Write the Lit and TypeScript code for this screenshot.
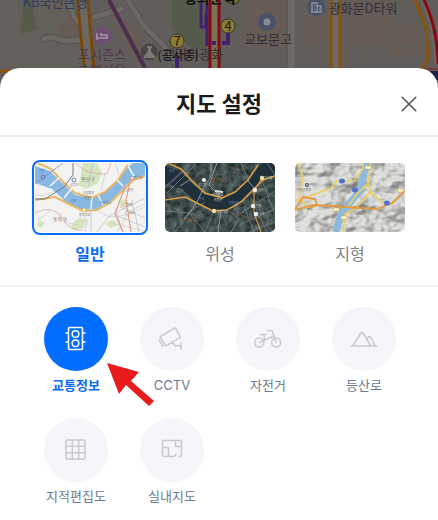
import { LitElement, html, css, svg, nothing } from "lit";
import { customElement, state } from "lit/decorators.js";

const backdrop = svg`
  <rect width="438" height="100" fill="#615d5a" />
  <path d="M0 0H70L84 72H0Z" fill="#63605c" />
  <path d="M24 0h8l4 30-16 4z M172 0h35v50l-17-2-18-20z" fill="#545b4b" />
  <path d="M50 0h16v10H50z M58 20l16-4 4 20-18 4z M112 28l20-8 14 24-12 12z M243 0h44v48h-44z M306 14h22v32h-22z M348 0h44v46h-44z M396 24h26v22h-26z M392 48h30v8h-30z" fill="#675c55" />
  <g fill="none" stroke-linecap="round">
    <path d="M44 39q8-3 14 0t22 1M68 0q4 18 16 28M94 17l28-8M128 0l16 26 22 22 12 20" stroke="#57534f" stroke-width="7" />
    <path d="M44 39q8-3 14 0t22 1M68 0q4 18 16 28M94 17l28-8M128 0l16 26 22 22 12 20" stroke="#6b6864" stroke-width="5" />
  </g>
  <path d="M291 0V68M336 0V70" stroke="#6b6a68" stroke-width="7" />
  <path d="M287 0V66" stroke="#55534f" />
  <path d="M83 0l7 70" stroke="#6b6864" stroke-width="10" />
  <path d="M78 0q1 25 7 70M88 0q2 28 6 70" fill="none" stroke="#7a4707" stroke-width="3" />
  <path d="M109 0l36 68" stroke="#4d2c4c" stroke-width="4" />
  <path d="M331 0V70M340 0V70" stroke="#8a5308" stroke-width="3" />
  <path d="M415 0l11 27 2 32-5 9" fill="none" stroke="#8a5308" stroke-width="3" />
  <path d="M423 0q13 26 14 64" fill="none" stroke="#6b6864" stroke-width="5" />
  <path d="M424 0q13 26 14 64" fill="none" stroke="#850a12" stroke-width="3" />
  <path d="M210 0h10v72h-10z" fill="#7b7058" />
  <path d="M201 3v24h5V14M207 5v41" fill="none" stroke="#42206f" stroke-width="3" />
  <path d="M222 43h6V33M212 43h4M177 57v11" fill="none" stroke="#42206f" stroke-width="4" />
  <path d="M210 0V70M219 0V70" stroke="#850a12" stroke-width="3" />
  <path d="M0 71h20" stroke="#8a5308" stroke-width="3" />
  <path d="M20 69H438" stroke="#74393c" stroke-width="2" />
  <path d="M428 71h10v9h-10z" fill="#1f2143" />
  <circle cx="102" cy="36" r="9" fill="#6d4f72" />
  <path d="M97 33v7M97 38h10v-3h-6v-2" fill="none" stroke="#a797a9" stroke-width="1.5" />
  <circle cx="149" cy="52" r="8.5" fill="#474542" />
  <path d="M147 46h5v2h-1v3l4 5v2h-11v-2l4-5v-3h-1z" fill="#7b7874" />
  <circle cx="267" cy="22" r="9" fill="#4a5068" />
  <circle cx="267" cy="22" r="3.5" fill="#888b96" />
  <circle cx="316" cy="7" r="9" fill="#4a5068" />
  <path d="M312 12V3h5v9M317 6h4v6M311 12h11M314 6h1M314 9h1M319 9h1" fill="none" stroke="#8f929c" stroke-width="1.4" />
  <circle cx="233" cy="-3" r="7" fill="#81742f" stroke="#24231f" />
  <circle cx="177" cy="41" r="7" fill="#8b7d32" stroke="#383527" />
  <circle cx="228" cy="26" r="7" fill="#8b7d32" stroke="#383527" />
  <g class="map-text" text-anchor="middle">
    <text x="177" y="46" fill="#171610">7</text>
    <text x="228" y="31" fill="#171610">4</text>
    <text x="55" y="7" fill="#293d5c">KB국민은행</text>
    <text x="102" y="59" fill="#503653">포시즌스</text>
    <text x="102" y="75" fill="#503653">호텔서울</text>
    <text x="193" y="59" fill="#33312f">갤러리광화</text>
    <text x="178" y="60" class="small" fill="#151412">(공사중)</text>
    <text x="210" y="3" class="strong" fill="#0e0e0e">광화문역</text>
    <text x="268" y="44" fill="#2c303c">교보문고</text>
    <text x="363" y="13" fill="#2c303c">광화문D타워</text>
  </g>`;

const river =
  "M0 3L15 8 27 20 40 32 57 35 70 29 83 17 93 4 98 0H110V12L100 15 90 23 77 37 62 46 47 47 30 38 17 26 0 20Z";
const northBank = "M3 0L16 6 27 18 40 30 57 35 70 29 83 17 93 2";
const southBank = "M0 37L20 34 36 42 48 48 62 47 76 39 90 25 98 17 110 13";

const normalMap = svg`
  <rect width="110" height="69" fill="#f3f3f1" />
  <path d="M48 0h14l5 10-4 10-12 6-8-4 3-10z M36 62l8-7 10 2-6 8-10 2z M96 0h14v5l-8 3z M4 57l6 3-4 5-4-2z M70 60l9-3 4 5-8 3z M84 38l8-2 2 6-8 3z" fill="#d4e5c0" />
  <path d="M0 32q12 3 24-8M16 46q-8 10-14 10M24 50l10 10 16 4M48 50l4 10-2 9M64 48l10 6 18-2 18-8M70 10l-4 18M80 0l4 12M82 69l14-22 14-6M76 60l34 8" fill="none" stroke="#cfcfd2" stroke-width="0.8" />
  <path d="M62 69l12-16 20-10 16-8M88 69l-8-24M104 69l-7-32M80 52l30 12M85 44l25 11" fill="none" stroke="#c9c0cb" stroke-width="0.8" />
  <path d=${river} fill="#88b9e3" />
  <path d=${northBank} fill="none" stroke="#e8b568" stroke-width="2" />
  <path d=${southBank} fill="none" stroke="#e8b568" stroke-width="2" />
  <path d="M15 23l10-9M29 35l8-10M56 46l1-12M68 42l-5-10M82 17l6 6M93 3l6 10" stroke="#f7f6f2" stroke-width="1.5" />
  <path d="M38 0v12l-9 12L10 36H0" fill="none" stroke="#666c83" stroke-width="0.9" />
  <path d="M0 21L28 0" stroke="#9983c8" stroke-width="0.8" />
  <path d="M56 46v22M58 0l-5 24" stroke="#a5c9ea" stroke-width="0.8" fill="none" />
  <path d="M41 0q9 12 31 11l4-11M0 50q18-9 27 5t21 12" fill="none" stroke="#dba9a8" stroke-width="0.8" />
  <path d="M96 15l-5 22 5 32M90 24l-10 27 8 18" fill="none" stroke="#df9c7d" stroke-width="1.1" />
  <circle cx="8" cy="14" r="2" fill="none" stroke="#6d72c9" />
  <circle cx="39" cy="17" r="2" fill="#fff" stroke="#687fb0" />
  <circle cx="49" cy="47" r="2" fill="#fff3b0" stroke="#c69e50" stroke-width="0.6" />
  <g fill="#fff" stroke="#a88678" stroke-width="0.6"><circle cx="97" cy="15" r="1.5" /><circle cx="91" cy="27" r="1.5" /><circle cx="90" cy="42" r="1.5" /><circle cx="92" cy="50" r="1.5" /></g>
  <g class="tiny" fill="#6d7070">
    <text x="46" y="18" class="district">용산구</text>
    <text x="18" y="58" class="district">동작구</text>
    <text x="35" y="23">삼각지</text><text x="48" y="31">국립중앙</text><text x="49" y="36">박물관</text>
    <text x="44" y="53">동작대교</text><text x="99" y="16">압구정</text><text x="93" y="28">신사</text>
    <text x="92" y="43">반포</text><text x="94" y="51">서초</text>
    <text x="36" y="39" fill="#4278b4">한강</text><text x="65" y="41" fill="#4278b4">반포대교</text><text x="4" y="9" fill="#4278b4">한강</text>
  </g>`;

const satelliteMap = svg`
  <defs>
    <filter id="city" x="0" y="0" width="1" height="1" color-interpolation-filters="sRGB">
      <feTurbulence type="fractalNoise" baseFrequency="0.16" numOctaves="4" seed="4" />
      <feColorMatrix values="0.4 0 0 0 0.05  0.4 0 0 0 0.1  0.4 0 0 0 0.1  0 0 0 0 1" />
    </filter>
  </defs>
  <rect width="110" height="69" filter="url(#city)" />
  <path d=${river} fill="#20303b" />
  <path d="M0 48l24 2 16 19M10 69l16-21 14-9M48 50l-8 19M64 48l10 8-8 13M70 54l40-26M74 62l36-16M84 69l26-10M79 43l10 26M86 35l16 34M98 20l12 32M2 30l28-28M0 24L26 0M84 18l-8-18M102 0l8 12" fill="none" stroke="#788083" stroke-width="0.8" />
  <path d="M46 0v14l-6 8-9 19-12 15M56 48l-3 21M52 0l-8 22 12 12M15 23l11-7M82 17l7 8" fill="none" stroke="#8fa0ab" stroke-width="0.9" />
  <path d="M0 25L28 0" stroke="#6762a0" stroke-width="0.8" />
  <path d="M62 3q14 4 17 13M66 50q24 4 42 18" fill="none" stroke="#79514b" stroke-width="0.8" />
  <path d=${northBank} fill="none" stroke="#d79e42" stroke-width="1.6" />
  <path d=${southBank} fill="none" stroke="#d79e42" stroke-width="1.6" />
  <path d="M97 15l-8 13v22l7 19" fill="none" stroke="#cd9750" stroke-width="1.2" />
  <path d="M50 28l8 1" stroke="#d5e0e3" stroke-width="2" />
  <g fill="#f5efe6"><circle cx="90" cy="27" r="2.2" /><circle cx="88" cy="43" r="2.2" /><circle cx="91" cy="51" r="2.2" /><circle cx="39" cy="17" r="2" /></g>
  <g fill="#f8dfa0"><circle cx="97" cy="15" r="2.2" /><circle cx="49" cy="48" r="2.2" /></g>
  <g class="tiny" fill="#d1d2cc">
    <text x="46" y="18" class="district" fill="#bd7a49">용산구</text>
    <text x="18" y="58" class="district" fill="#a7633d">동작구</text>
    <text x="33" y="23">삼각지</text><text x="47" y="33">국립중앙</text><text x="49" y="38">박물관</text>
    <text x="52" y="50">동작대교</text><text x="99" y="16">압구정</text><text x="93" y="28">신사</text>
    <text x="91" y="44">반포</text><text x="94" y="52">서초</text>
    <text x="34" y="37" fill="#6584bd">한강</text><text x="64" y="41" fill="#6584bd">반포대교</text><text x="4" y="9" fill="#6584bd">한강</text>
  </g>`;

const terrainMap = svg`
  <defs>
    <filter id="relief" x="0" y="0" width="1" height="1" color-interpolation-filters="sRGB">
      <feTurbulence type="fractalNoise" baseFrequency="0.045 0.06" numOctaves="3" seed="11" />
      <feDiffuseLighting surfaceScale="9" diffuseConstant="1.05" lighting-color="#ffffff">
        <feDistantLight azimuth="225" elevation="56" />
      </feDiffuseLighting>
      <feColorMatrix values="0.42 0 0 0 0.46  0 0.42 0 0 0.46  0 0 0.42 0 0.45  0 0 0 0 1" />
    </filter>
  </defs>
  <rect width="110" height="69" filter="url(#relief)" />
  <path d="M0 14h22l10 12-8 18-24 2z" fill="#e0e0dc" opacity="0.6" />
  <path d="M72 0l-3 10-4 18-12 14-8 12-4 15" fill="none" stroke="#8db9dd" stroke-width="7" />
  <path d="M70 42l10-6 20 4 10-4" fill="none" stroke="#bfd6ea" stroke-width="1.2" />
  <path d="M3 0l5 14-4 20 8 10M0 38l12-4 24-9 6-7 18 0 8-12V0M76 0l-3 20-12 12-8 12M73 20l3 8-15 17-11 6-2 18M74 29l16 12 10-1" fill="none" stroke="#edcf62" stroke-width="1.6" />
  <path d="M0 46l8-12 12 2 2 6-10 4M0 47l18-5 34 2 30 2 15-6 13-12" fill="none" stroke="#e39a43" stroke-width="1.8" />
  <g fill="#4f70cf"><ellipse cx="47" cy="18" rx="3" ry="2.5" /><ellipse cx="60" cy="27" rx="3" ry="2.5" /><ellipse cx="92" cy="40" rx="3" ry="2.5" /></g>
  <g fill="#fff5c8" stroke="#c9a957" stroke-width="0.5"><rect x="70" y="3" width="6" height="3" /><rect x="38" y="45" width="6" height="3" /><rect x="46" y="53" width="6" height="3" /><rect x="103" y="26" width="5" height="3" /></g>
  <circle cx="12" cy="22" r="2" fill="#465675" /><circle cx="12" cy="22" r="0.8" fill="#fff" />
  <g class="tiny" fill="#5c6066"><text x="15" y="23">가평</text><text x="2" y="28">가평군청역</text><text x="38" y="27">남산</text><text x="57" y="18">춘천</text><text x="64" y="45">강촌</text><text x="12" y="48">설악</text></g>`;

const icons = {
  traffic: svg`<rect x="8.5" y="4.5" width="14" height="22" rx="1" /><circle cx="15.5" cy="11" r="3.3" /><circle cx="15.5" cy="20.2" r="3.3" /><path d="M8.5 10H6M8.5 19H6M25 10h-2.5M25 19h-2.5" />`,
  cctv: svg`<path d="M4.7 13.5L18.2 5.2q1-.5 1.6.5l4.200 7.600q.5 1-.5 1.600L10.700 22.500q-1 .5-1.500-.5L4.300 15q-.5-.9.400-1.500ZM2.800 17l4.400 6.500M16.500 19.200l2.500 3.600h6M25 19.500v7" />`,
  bike: svg`<circle cx="7.3" cy="19.5" r="4.5" /><circle cx="24.2" cy="19.5" r="4.5" /><path d="M7.3 19.5L20.6 13.5M24.2 19.5L19.8 7.5H15.5M8.5 11.5h5.5M11.5 11.5l1.3 5.5" />`,
  trail: svg`<path d="M3 23h26M5 22.5L13 10q1-1.5 2 0L22.500 22.500M18.500 16.300l2.300-2.600q.8-.9 1.600 0L27 22.500" />`,
  parcel: svg`<rect x="6" y="6" width="19" height="19" rx="1" /><path d="M12.3 6v19M18.7 6v19M6 12.3h19M6 18.7h19" />`,
  indoor: svg`<path d="M18 22.5H7.5q-1 0-1-1V7.5q0-1 1-1h17q1 0 1 1v13q0 2-2.5 2M18 22.5l2.500-2.500M6.500 13.500h6v9M19.500 6.500v6h6" />`,
};

const mapTypes = [
  { id: "normal", name: "일반", art: normalMap },
  { id: "satellite", name: "위성", art: satelliteMap },
  { id: "terrain", name: "지형", art: terrainMap },
];

const layers = [
  { id: "traffic", name: "교통정보", icon: icons.traffic },
  { id: "cctv", name: "CCTV", icon: icons.cctv },
  { id: "bike", name: "자전거", icon: icons.bike },
  { id: "trail", name: "등산로", icon: icons.trail },
  { id: "parcel", name: "지적편집도", icon: icons.parcel },
  { id: "indoor", name: "실내지도", icon: icons.indoor },
];

@customElement("app-root")
export class AppRoot extends LitElement {
  @state() private mapType = "normal";
  @state() private active = new Set(["traffic"]);

  static styles = css`
    :host {
      display: flow-root;
      position: relative;
      min-height: 100vh;
      overflow: hidden;
      background: #615d5a;
      font-family: Inter, "Noto Sans CJK KR", sans-serif;
    }
    * {
      box-sizing: border-box;
    }
    button {
      margin: 0;
      padding: 0;
      border: 0;
      background: none;
      font: inherit;
      cursor: pointer;
    }
    .backdrop {
      position: absolute;
      inset: 0 0 auto;
      width: 100%;
      height: 100px;
    }
    .map-text {
      font: 13px "Noto Sans CJK KR", sans-serif;
    }
    .small {
      font-size: 12px;
    }
    .strong {
      font-size: 14px;
      font-weight: 700;
    }
    .sheet {
      position: relative;
      min-height: calc(100vh - 68px);
      margin-top: 68px;
      padding-bottom: 12px;
      border-radius: 20px 20px 0 0;
      background: #fff;
    }
    header {
      display: grid;
      grid-template-columns: 32px 1fr 32px;
      align-items: center;
      padding: 20px 13px 15px;
      border-bottom: 2px solid #eceef4;
    }
    h1 {
      grid-column: 2;
      margin: 0;
      font-size: 22px;
      line-height: 32px;
      font-weight: 700;
      text-align: center;
      color: #1a1a1a;
    }
    .close {
      display: grid;
      place-items: center;
      height: 32px;
    }
    .types {
      display: grid;
      grid-template-columns: repeat(3, 1fr);
      gap: 14px;
      padding: 23px 30px 19px 32px;
      border-bottom: 2px solid #f1f2f7;
    }
    .type {
      font-size: 16px;
      line-height: 24px;
      color: #808080;
    }
    .thumb {
      display: block;
      margin-bottom: 7px;
      padding: 1px;
      border: 2px solid transparent;
      border-radius: 8px;
    }
    .thumb svg {
      display: block;
      width: 100%;
      height: 69px;
      border-radius: 5px;
    }
    .type.on {
      font-weight: 700;
      color: #0a6cf5;
    }
    .type.on .thumb {
      border-color: #0a6cff;
    }
    .type.on .thumb svg {
      border-radius: 3px;
    }
    .tiny {
      font: 3px "Noto Sans CJK KR", sans-serif;
    }
    .district {
      font-size: 5px;
    }
    .layers {
      display: grid;
      grid-template-columns: repeat(4, 1fr);
      row-gap: 23px;
      padding: 20px 26px 0 28px;
    }
    .cell {
      position: relative;
      display: grid;
      justify-items: center;
    }
    .layer {
      display: grid;
      justify-items: center;
      gap: 4px;
      font-size: 13px;
      line-height: 20px;
      color: #6a7b94;
      white-space: nowrap;
    }
    .disc {
      display: grid;
      place-items: center;
      width: 64px;
      height: 64px;
      border-radius: 50%;
      background: #f4f6fa;
    }
    .disc svg {
      fill: none;
      stroke: #c9cacb;
      stroke-width: 1.5;
      stroke-linecap: round;
      stroke-linejoin: round;
    }
    .layer.on {
      font-weight: 700;
      color: #0a6cf5;
    }
    .layer.on .disc {
      background: #036eff;
    }
    .layer.on .disc svg {
      stroke: #fff;
    }
    .arrow {
      position: absolute;
      left: calc(50% + 31px);
      top: 56px;
      z-index: 1;
      pointer-events: none;
    }
  `;

  private toggle(id: string) {
    const next = new Set(this.active);
    if (!next.delete(id)) next.add(id);
    this.active = next;
  }

  render() {
    return html`
      <svg class="backdrop" viewBox="0 0 438 100" preserveAspectRatio="xMidYMin slice" aria-hidden="true">${backdrop}</svg>
      <main class="sheet">
        <header>
          <h1>지도 설정</h1>
          <button class="close" aria-label="닫기">
            <svg width="16" height="16" viewBox="0 0 16 16" fill="none" stroke="#505050" stroke-width="1.5" stroke-linecap="round">
              <path d="M1.2 1.2l13.6 13.6M14.8 1.2L1.2 14.8" />
            </svg>
          </button>
        </header>
        <section class="types">
          ${mapTypes.map(
            (t) => html`<button
              class="type ${t.id === this.mapType ? "on" : ""}"
              aria-pressed=${t.id === this.mapType}
              @click=${() => (this.mapType = t.id)}
            >
              <span class="thumb"><svg viewBox="0 0 110 69" preserveAspectRatio="xMidYMid slice" aria-hidden="true">${t.art}</svg></span>
              ${t.name}
            </button>`
          )}
        </section>
        <section class="layers">
          ${layers.map(
            (l) => html`<div class="cell">
              <button
                class="layer ${this.active.has(l.id) ? "on" : ""}"
                aria-pressed=${this.active.has(l.id)}
                @click=${() => this.toggle(l.id)}
              >
                <span class="disc"><svg width="32" height="32" viewBox="0 0 32 32" aria-hidden="true">${l.icon}</svg></span>
                <span>${l.name}</span>
              </button>
              ${l.id === "traffic"
                ? html`<svg class="arrow" width="48" height="44" viewBox="0 0 48 44" aria-hidden="true">
                    <path d="M0 0L32 9 24 18 47 38 42 43 19 22 12 31Z" fill="#e81c1c" />
                  </svg>`
                : nothing}
            </div>`
          )}
        </section>
      </main>
    `;
  }
}
